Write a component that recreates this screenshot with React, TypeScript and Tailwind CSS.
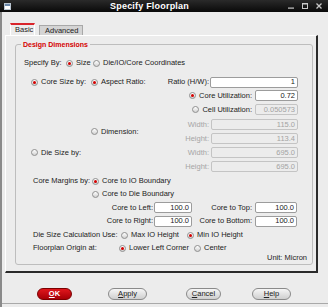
import React from 'react';
import clsx from 'clsx';

const Radio: React.FC<{ checked?: boolean; label: string }> = ({ checked, label }) => (
  <span className="flex items-center gap-[3px] whitespace-nowrap">
    <span className="w-[7px] h-[7px] shrink-0 rounded-full border border-[#8f8f8f] bg-linear-to-b from-white to-[#d2d2d2] flex items-center justify-center">
      {checked && <span className="w-[3px] h-[3px] rounded-full bg-[#d40000]" />}
    </span>
    <span>{label}</span>
  </span>
);

const Field: React.FC<{ value: string; w: string; disabled?: boolean; ml?: string }> = ({ value, w, disabled, ml }) => (
  <div
    className={clsx(
      'h-[11px] shrink-0 rounded-[2px] border flex items-center justify-end pr-[2px]',
      disabled ? 'bg-[#ececec] border-[#c4c4c4] text-[#a3a3a3]' : 'bg-white border-[#9c9c9c] text-[#222]',
      w,
      ml
    )}
  >
    {value}
  </div>
);

const Btn: React.FC<{ u: string; rest: string; w: string; ml: string; primary?: boolean }> = ({ u, rest, w, ml, primary }) => (
  <div
    className={clsx(
      'h-[12px] rounded-full border flex items-center justify-center',
      primary
        ? 'bg-linear-to-b from-[#e0161c] to-[#a80006] border-[#7a0000] text-white font-bold'
        : 'bg-linear-to-b from-[#f6f6f6] to-[#cfcfcf] border-[#8a8a8a] text-[#222]',
      w,
      ml
    )}
  >
    <span className="underline">{u}</span>
    {rest}
  </div>
);

const App: React.FC = () => {
  return (
    <div className="w-[328px] h-[307px] overflow-hidden flex flex-col bg-[#ececec] text-[7.5px] leading-none text-[#222] font-['Liberation_Sans',Arial,sans-serif]">
      {/* title bar */}
      <div className="h-[12px] shrink-0 bg-linear-to-b from-[#2a2a2a] to-[#0a0a0a] flex items-center">
        <div className="ml-[4px] w-[7px] h-[7px] border border-[#b8c4d0] bg-white flex flex-col">
          <div className="h-[2px] bg-[#6b88aa]" />
        </div>
        <div className="flex-1 text-center text-white font-bold text-[9px] tracking-[0.2px]">Specify Floorplan</div>
        <div className="flex items-center gap-[8px] pr-[6px]">
          <svg width="6" height="6" viewBox="0 0 6 6">
            <rect x="0" y="4.5" width="6" height="1.2" fill="#c8c8c8" />
          </svg>
          <svg width="6" height="6" viewBox="0 0 6 6">
            <rect x="0.5" y="0.5" width="5" height="5" fill="none" stroke="#c8c8c8" strokeWidth="1" />
            <rect x="0" y="0" width="6" height="1.5" fill="#c8c8c8" />
          </svg>
          <svg width="6" height="6" viewBox="0 0 6 6">
            <path d="M0.5 0.5 L5.5 5.5 M5.5 0.5 L0.5 5.5" stroke="#c8c8c8" strokeWidth="1.3" />
          </svg>
        </div>
      </div>

      {/* body */}
      <div className="flex-1 flex flex-col border-l-2 border-[#8a8a8a] pt-[11px]">
        {/* tabs */}
        <div className="flex items-end ml-[8px]">
          <div className="w-[25px] h-[12px] border-t-2 border-[#d9252b] border-x border-x-white bg-[#ececec] pl-[4px] flex items-center">
            Basic
          </div>
          <div className="ml-[4px] w-[44px] h-[10px] bg-[#d4d4d4] border border-b-0 border-[#a8a8a8] pl-[5px] flex items-center">
            Advanced
          </div>
        </div>

        {/* tab panel */}
        <div className="ml-[3px] w-[313px] border-t border-l border-white border-r-2 border-b-2 border-r-[#2a2a2a] border-b-[#2a2a2a] pt-[4px] pl-[9px] pb-[6px]">
          <fieldset className="w-[298px] border border-[#bdbdbd] rounded-[3px] pb-[2px]">
            <legend className="ml-[5px] px-[2px] leading-[9px] text-[7px] font-bold text-[#d40000]">Design Dimensions</legend>

            {/* specify by */}
            <div className="mt-[7px] h-[14px] flex items-center pl-[8px]">
              <div className="w-[42px]">Specify By:</div>
              <div className="w-[27px]">
                <Radio checked label="Size" />
              </div>
              <Radio label="Die/IO/Core Coordinates" />
            </div>

            {/* core size by */}
            <div className="mt-[6px] h-[12px] flex items-center pl-[15px] pr-[14px]">
              <div className="w-[60px]">
                <Radio checked label="Core Size by:" />
              </div>
              <Radio checked label="Aspect Ratio:" />
              <div className="flex-1" />
              <span>Ratio (H/W):</span>
              <Field value="1" w="w-[88px]" ml="ml-[1px]" />
            </div>

            <div className="mt-[2px] h-[11px] flex items-center justify-end pr-[14px]">
              <Radio checked label="Core Utilization:" />
              <Field value="0.72" w="w-[43px]" ml="ml-[3px]" />
            </div>

            <div className="mt-[3px] h-[11px] flex items-center justify-end pr-[14px]">
              <Radio label="Cell Utilization:" />
              <Field value="0.050573" w="w-[43px]" ml="ml-[3px]" disabled />
            </div>

            {/* dimension */}
            <div className="mt-[4px] flex items-center">
              <div className="pl-[75px]">
                <Radio label="Dimension:" />
              </div>
              <div className="flex-1 flex flex-col pr-[14px]">
                <div className="h-[11px] flex items-center justify-end">
                  <span className="text-[#a5a5a5]">Width:</span>
                  <Field value="115.0" w="w-[87px]" ml="ml-[2px]" disabled />
                </div>
                <div className="mt-[3px] h-[11px] flex items-center justify-end">
                  <span className="text-[#a5a5a5]">Height:</span>
                  <Field value="113.4" w="w-[87px]" ml="ml-[2px]" disabled />
                </div>
              </div>
            </div>

            {/* die size */}
            <div className="mt-[3px] flex items-start">
              <div className="pl-[15px] h-[11px] flex items-center">
                <Radio label="Die Size by:" />
              </div>
              <div className="flex-1 flex flex-col pr-[14px]">
                <div className="h-[11px] flex items-center justify-end">
                  <span className="text-[#a5a5a5]">Width:</span>
                  <Field value="695.0" w="w-[87px]" ml="ml-[2px]" disabled />
                </div>
                <div className="mt-[3px] h-[11px] flex items-center justify-end">
                  <span className="text-[#a5a5a5]">Height:</span>
                  <Field value="695.0" w="w-[87px]" ml="ml-[2px]" disabled />
                </div>
              </div>
            </div>

            {/* core margins */}
            <div className="mt-[3px] h-[12px] flex items-center pl-[17px]">
              <div className="w-[59px]">Core Margins by:</div>
              <Radio checked label="Core to IO Boundary" />
            </div>
            <div className="mt-[1px] h-[12px] flex items-center pl-[76px]">
              <Radio label="Core to Die Boundary" />
            </div>

            <div className="mt-[2px] h-[11px] flex items-center">
              <div className="w-[176px] flex items-center justify-end">
                <span>Core to Left:</span>
                <Field value="100.0" w="w-[38px]" ml="ml-[1px]" />
              </div>
              <div className="w-[105px] flex items-center justify-end">
                <span>Core to Top:</span>
                <Field value="100.0" w="w-[42px]" ml="ml-[3px]" />
              </div>
            </div>
            <div className="mt-[2px] h-[12px] flex items-center">
              <div className="w-[176px] flex items-center justify-end">
                <span>Core to Right:</span>
                <Field value="100.0" w="w-[38px]" ml="ml-[1px]" />
              </div>
              <div className="w-[105px] flex items-center justify-end">
                <span>Core to Bottom:</span>
                <Field value="100.0" w="w-[42px]" ml="ml-[3px]" />
              </div>
            </div>

            <div className="mt-[2px] h-[12px] flex items-center pl-[17px]">
              <div className="w-[88px]">Die Size Calculation Use:</div>
              <div className="w-[66px]">
                <Radio label="Max IO Height" />
              </div>
              <Radio checked label="Min IO Height" />
            </div>

            <div className="mt-[1px] h-[12px] flex items-center pl-[17px]">
              <div className="w-[86px]">Floorplan Origin at:</div>
              <div className="w-[75px]">
                <Radio checked label="Lower Left Corner" />
              </div>
              <Radio label="Center" />
            </div>

            <div className="h-[8px] flex items-center justify-end pr-[5px]">Unit: Micron</div>
          </fieldset>
        </div>

        {/* buttons */}
        <div className="mt-[15px] flex items-center">
          <Btn primary u="O" rest="K" w="w-[35px]" ml="ml-[35px]" />
          <Btn u="A" rest="pply" w="w-[39px]" ml="ml-[36px]" />
          <Btn u="C" rest="ancel" w="w-[35px]" ml="ml-[39px]" />
          <Btn u="H" rest="elp" w="w-[39px]" ml="ml-[31px]" />
        </div>
        <div className="mt-[3px] border-b border-[#a9a9a9]" />
      </div>
    </div>
  );
};

export default App;
